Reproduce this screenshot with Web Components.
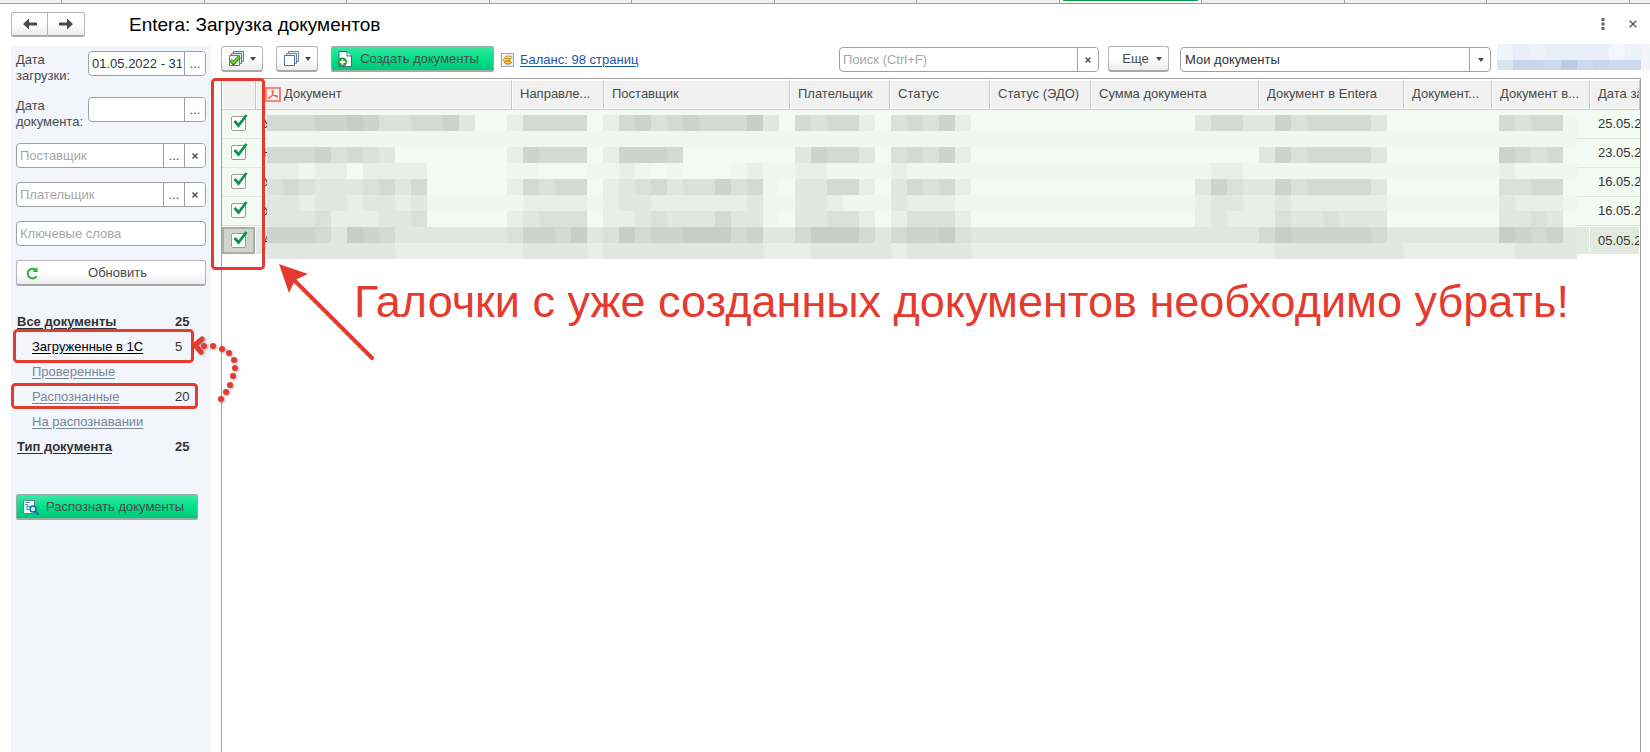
<!DOCTYPE html>
<html lang="ru">
<head>
<meta charset="utf-8">
<title>Entera: Загрузка документов</title>
<style>
  html, body { margin: 0; }
  body {
    font: 13px/16px "Liberation Sans", Arial, sans-serif;
    color: #4a4a4a;
    background: #fff;
    --line: #a0a0a0;
    --red: #e53b2e;
  }
</style>
</head>
<body>
<entera-app></entera-app>

<template id="t-app">
  <style>
    :host { display: flex; flex-direction: column; min-height: 100vh; position: relative; overflow: hidden; }
    .body { flex: 1; display: flex; gap: 10px; padding-left: 11px; }
    side-panel { flex: 0 0 200px; min-width: 0; }
    main { flex: 1; min-width: 0; display: flex; flex-direction: column; gap: 6px; }
    doc-table { flex: 1; margin-right: 9px; }
  </style>
  <tab-strip></tab-strip>
  <window-header>Entera: Загрузка документов</window-header>
  <div class="body">
    <side-panel></side-panel>
    <main>
      <doc-toolbar></doc-toolbar>
      <doc-table></doc-table>
    </main>
  </div>
  <note-layer>Галочки с уже созданных документов необходимо убрать!</note-layer>
</template>

<template id="t-tabs">
  <style>
    :host { display: flex; height: 3px; background: #f0f0f0; border-bottom: 1px solid var(--line); overflow: hidden; }
    i { flex: 0 0 8.64%; box-sizing: border-box; border-right: 1px solid var(--line); }
    i:first-of-type { flex-basis: 62px; }
    i.on { background: #fff; padding: 0 3px; }
    i.on::before { content: ""; display: block; height: 1px; background: #0a9a4a; }
  </style>
  <i></i><i></i><i></i><i></i><i></i><i></i><i></i><i></i><i class="on"></i><i></i><i></i><i></i><i></i>
</template>

<template id="t-header">
  <style>
    :host { display: flex; align-items: center; height: 42px; padding: 0 10px 0 11px; box-sizing: border-box; }
    .nav { display: flex; margin-bottom: 2px; }
    .nav button {
      width: 37px; height: 25px; padding: 0; border: 1px solid #b4b4b4; border-bottom: 2px solid #a8a8a8;
      background: linear-gradient(#fff 50%, #ececec); display: grid; place-items: center;
    }
    .nav button:first-child { border-radius: 3px 0 0 3px; }
    .nav button:last-child { border-radius: 0 3px 3px 0; border-left: 0; }
    h1 { margin: 0 auto 0 44px; font-size: 19px; line-height: 24px; font-weight: 400; color: #000; }
    .win { border: 0; background: none; padding: 0; width: 14px; height: 14px; margin: 0 0 2px 16px; display: grid; place-items: center; }
  </style>
  <div class="nav">
    <button aria-label="Назад"><svg width="14" height="12" viewBox="0 0 14 12"><path d="M0 6l6-5.500v4h8v3H6v4z" fill="#4a4a4a"/></svg></button>
    <button aria-label="Вперед"><svg width="14" height="12" viewBox="0 0 14 12"><path d="M14 6L8 .5v4H0v3h8v4z" fill="#4a4a4a"/></svg></button>
  </div>
  <h1><slot></slot></h1>
  <button class="win" aria-label="Меню"><svg width="4" height="12"><path d="M.5 0h3v3h-3zM.5 4.500h3v3h-3zM.5 9h3v3h-3z" fill="#666"/></svg></button>
  <button class="win" aria-label="Закрыть"><svg width="8" height="8"><path d="M.7.700l6.600 6.600M7.300.7L.7 7.300" stroke="#555" stroke-width="1.300"/></svg></button>
</template>

<template id="t-field">
  <style>
    :host { display: flex; align-items: flex-start; }
    label { flex: 0 0 72px; padding-top: 1px; height: 31px; }
    label:empty { display: none; }
    .box { flex: 1; min-width: 0; display: flex; height: 25px; box-sizing: border-box; border: 1px solid var(--line); border-radius: 4px; background: #fff; overflow: hidden; }
    input { flex: 1; min-width: 0; border: 0; padding: 0 2px 0 3px; background: none; font: inherit; color: #333; outline: 0; }
    input::placeholder { color: #a6a6a6; opacity: 1; }
    button { flex: 0 0 21px; box-sizing: border-box; border: 0; border-left: 1px solid var(--line); background: #fff; padding: 0; font: inherit; color: #4a4a4a; display: grid; place-items: center; }
  </style>
  <label for="f"></label>
  <div class="box"><input id="f" type="text"></div>
</template>

<template id="t-button">
  <style>
    :host { display: block; }
    button {
      width: 100%; height: 26px; box-sizing: border-box; padding: 1px 9px 0; display: flex; align-items: center;
      border: 1px solid #b4b4b4; border-bottom: 2px solid #a8a8a8; border-radius: 3px;
      background: linear-gradient(#fff 50%, #ececec); font: inherit; color: #4a4a4a; white-space: nowrap;
    }
    :host([green]) button { background: linear-gradient(#3ce8a4, #00e08a 50%, #00c878); border-color: #9aaea4; border-radius: 2px; padding: 1px 6px 0; }
    .text { flex: 1; text-align: center; }
    :host([icon-only]) button { padding: 0 6px; justify-content: space-between; }
    :host([icon-only]) .text { display: none; }
    .caret { display: none; width: 0; border: 3px solid transparent; border-top: 4px solid #4a4a4a; border-bottom: 0; }
    :host([menu]) .caret { display: block; }
    :host([menu]:not([icon-only])) button { padding: 1px 6px 0; }
  </style>
  <button><slot name="icon"></slot><span class="text"><slot></slot></span><span class="caret"></span></button>
</template>

<template id="t-side">
  <style>
    :host { display: block; background: #f2f5fb; padding: 5px 5px 0; box-sizing: border-box; }
    form { display: flex; flex-direction: column; gap: 14px; }
    svg { display: block; }
    table { width: 177px; margin: 23px 0 35px; border-collapse: collapse; }
    td, th { height: 25px; padding: 0 0 0 1px; text-align: left; font-weight: 400; color: #333; }
    th { padding-left: 16px; }
    td { width: 18px; }
    a { color: #7a8896; }
    a.on { color: #000; }
    .top th, .top td { font-weight: 700; }
    .top th { padding-left: 1px; }
    .top a { color: #333; }
    a { text-underline-offset: 2px; }
    .run { width: 182px; }
  </style>
  <form>
    <form-field label="Дата загрузки:" value="01.05.2022 - 31" pick></form-field>
    <form-field label="Дата документа:" pick></form-field>
    <form-field placeholder="Поставщик" pick clear></form-field>
    <form-field placeholder="Плательщик" pick clear></form-field>
    <form-field placeholder="Ключевые слова"></form-field>
    <tool-button>
      <svg slot="icon" width="13" height="13" viewBox="0 0 13 13"><path d="M10.600 9.200A4.800 4.800 0 1 1 9.600 2.900" fill="none" stroke="#2fae3c" stroke-width="2"/><path d="M11.500 0v5H6.500z" fill="#2fae3c"/></svg>
      Обновить
    </tool-button>
  </form>
  <table>
    <tr class="top"><th><a href="#all">Все документы</a></th><td>25</td></tr>
    <tr><th><a class="on" href="#loaded">Загруженные в 1С</a></th><td>5</td></tr>
    <tr><th><a href="#checked">Проверенные</a></th><td></td></tr>
    <tr><th><a href="#recognized">Распознанные</a></th><td>20</td></tr>
    <tr><th><a href="#pending">На распознавании</a></th><td></td></tr>
    <tr class="top"><th><a href="#type">Тип документа</a></th><td>25</td></tr>
  </table>
  <tool-button class="run" green>
    <svg slot="icon" width="16" height="15" viewBox="0 0 16 15"><path d="M.5.5h11v13H.5z" fill="#f4fbff" stroke="#5f8296"/><path d="M2 2.500h5M2 4.500h3M4 6.500h3M4 9.500h2M4 4v6" stroke="#4da08a" fill="none"/><circle cx="10" cy="9" r="3" fill="#cfe9ff" stroke="#1668b0" stroke-width="1.500"/><path d="M12 11l3.500 3.500" stroke="#1668b0" stroke-width="2"/></svg>
    Распознать документы
  </tool-button>
</template>

<template id="t-toolbar">
  <style>
    :host { display: flex; align-items: center; height: 26px; }
    svg { display: block; }
    .all, .none { width: 42px; margin-right: 13px; }
    .make { width: 163px; margin-right: 7px; }
    .balance { display: flex; align-items: center; gap: 6px; color: #1a56a8; white-space: nowrap; text-underline-offset: 2px; margin-right: auto; padding-top: 1px; }
    .search { width: 260px; margin: 1px 9px 0 0; }
    .more { width: 61px; margin-right: 11px; }
    .combo { position: relative; width: 311px; height: 25px; margin: 1px 6px 0 0; }
    select { appearance: none; width: 100%; height: 25px; padding: 0 26px 0 4px; border: 1px solid var(--line); border-radius: 4px; background: #fff; font: inherit; color: #333; }
    .combo i { position: absolute; right: 0; top: 0; width: 22px; height: 25px; border-left: 1px solid var(--line); box-sizing: border-box; display: grid; place-items: center; pointer-events: none; }
    .combo i::before { content: ""; border: 3px solid transparent; border-top: 4px solid #4a4a4a; border-bottom: 0; }
    pixel-mask { align-self: flex-start; margin-top: -2px; }
  </style>
  <tool-button class="all" icon-only menu>
    <svg slot="icon" width="17" height="16" viewBox="0 0 17 16"><path d="M5.500 3V.5h10v10H13M3.500 5V2.500h10v10H11" fill="#dfe9f3" stroke="#5b7a99"/><path d="M1.500 4.500h10v10h-10z" fill="#fff" stroke="#5b7a99"/><path d="M2.500 9l3 3.500 6-7" fill="none" stroke="#3a8a1e" stroke-width="3.600"/><path d="M2.800 9.200l2.800 2.800 5.600-6.200" fill="none" stroke="#7fd13a" stroke-width="1.800"/></svg>
  </tool-button>
  <tool-button class="none" icon-only menu>
    <svg slot="icon" width="17" height="16" viewBox="0 0 17 16"><path d="M5.500 3V.5h10v10H13M3.500 5V2.500h10v10H11" fill="#e8eef5" stroke="#6b88a8"/><path d="M1.500 4.500h10v10h-10z" fill="#fff" stroke="#4d7299"/></svg>
  </tool-button>
  <tool-button class="make" green>
    <svg slot="icon" width="14" height="16" viewBox="0 0 14 16"><path d="M1 .5h8l4.500 4.500v10.500H1z" fill="#fff" stroke="#3d6a80"/><path d="M9 .5V5h4.500" fill="#dceaf2" stroke="#3d6a80"/><circle cx="4.500" cy="11" r="4.500" fill="#2c9a3a"/><path d="M4.500 8.300v5.400M1.800 11h5.400" stroke="#fff" stroke-width="1.800"/></svg>
    Создать документы
  </tool-button>
  <a class="balance" href="#balance"><svg width="13" height="14" viewBox="0 0 13 14"><path d="M.5.5h12v13H.5z" fill="#eef3f8" stroke="#8fa6ba"/><ellipse cx="7.500" cy="4.500" rx="3.500" ry="1.500" fill="#ffd75a" stroke="#c07d10" stroke-width=".8"/><ellipse cx="5.500" cy="7" rx="3.500" ry="1.500" fill="#ffd75a" stroke="#c07d10" stroke-width=".8"/><ellipse cx="7" cy="9.500" rx="3.500" ry="1.700" fill="#ffc52e" stroke="#b06c08" stroke-width=".8"/></svg><span>Баланс: 98 страниц</span></a>
  <form-field class="search" placeholder="Поиск (Ctrl+F)" clear></form-field>
  <tool-button class="more" menu>Еще</tool-button>
  <div class="combo"><select aria-label="Отбор"><option>Мои документы</option></select><i></i></div>
  <pixel-mask id="user"></pixel-mask>
</template>

<template id="t-table">
  <style>
    :host { display: block; position: relative; border: 1px solid var(--line); border-bottom: 0; overflow: hidden; }
    table { width: 100%; table-layout: fixed; border-collapse: separate; border-spacing: 0; }
    th, td { box-sizing: border-box; padding: 0 0 0 8px; text-align: left; font-weight: 400; white-space: nowrap; overflow: hidden; }
    th { height: 31px; background: #f1f1f1; border: 2px solid #fff; border-right: 1px solid #c8c8c8; border-left: 1px solid #fff; box-shadow: inset 0 -1px #fff; border-bottom: 1px solid #c8c8c8; padding: 0 0 2px 7px; }
    th span { display: flex; align-items: center; gap: 3px; }
    th:nth-child(2) { padding-left: 8px; }
    td { height: 29px; background: #f3faf3; border-bottom: 1px solid #e2e2e2; color: #333; }
    th:first-child, td:first-child { padding: 0; }
    td:nth-child(2) { padding-left: 7px; }
    tr.on td { background: #e2e9e1; border-top: 1px solid #fff; border-right: 1px solid #fff; border-bottom: 1px solid #fff; box-shadow: none; }
    tr.on td:first-child { background: #cfd5ce; box-shadow: inset 0 0 0 2px #a9afa9; }
    pixel-mask { position: absolute; left: 45px; top: 36px; }
    svg { display: block; }
  </style>
  <table>
    <colgroup><col style="width:34px"><col style="width:256px"><col style="width:92px"><col style="width:186px"><col style="width:100px"><col style="width:100px"><col style="width:101px"><col style="width:168px"><col style="width:145px"><col style="width:88px"><col style="width:98px"><col></colgroup>
    <thead><tr>
      <th></th>
      <th><span><svg width="16" height="15" viewBox="0 0 16 15"><path d="M1 1h14v13H1z" fill="#fdf0ee" stroke="#ec6a5c" stroke-width="1.600"/><path d="M7.500 3c1.500 0 .5 4-1 6.200-1.200 1.800-2.900 2.800-3.200 2.200-.4-1 3-2.600 5.200-2.900 2-.3 4.400 0 4.200 1.100C12.500 10.500 9.500 9.300 8.200 7.300 7 5.500 6.500 3 7.500 3z" fill="none" stroke="#e8503f"/></svg>Документ</span></th>
      <th>Направле...</th><th>Поставщик</th><th>Плательщик</th><th>Статус</th><th>Статус (ЭДО)</th><th>Сумма документа</th><th>Документ в Entera</th><th>Документ...</th><th>Документ в...</th><th>Дата загрузки</th>
    </tr></thead>
    <tbody></tbody>
  </table>
  <pixel-mask id="rows"></pixel-mask>
</template>

<template id="t-check">
  <style>
    :host { display: block; position: relative; width: 15px; height: 15px; margin: 0 auto 1px 9px; }
    input { appearance: none; display: block; margin: 0; width: 15px; height: 15px; box-sizing: border-box; border: 1px solid #999; border-radius: 2px; background: #fff; }
    svg { position: absolute; left: 2px; top: -2px; pointer-events: none; display: none; }
    input:checked + svg { display: block; }
  </style>
  <input type="checkbox" checked aria-label="Выбрать документ"><svg width="15" height="14" viewBox="0 0 15 14"><path d="M1.500 7l4 4.500L13.500 1" fill="none" stroke="#0a9650" stroke-width="2.800"/></svg>
</template>

<template id="t-notes">
  <style>
    :host { position: absolute; inset: 0; pointer-events: none; overflow: hidden; color: var(--red); }
    svg { position: absolute; left: 0; top: 0; }
    p { position: absolute; left: 354px; top: 276px; margin: 0; font-size: 45px; line-height: 52px; white-space: nowrap; }
  </style>
  <svg width="400" height="420" fill="none" stroke="#e53b2e" stroke-width="3">
    <rect x="212.500" y="79.500" width="51" height="189" rx="3"/>
    <rect x="14.500" y="330.500" width="178" height="31" rx="3"/>
    <rect x="12.500" y="384.500" width="184" height="23" rx="3"/>
    <path d="M292 278l80 80" stroke-width="4" stroke-linecap="round"/>
    <path d="M279 264l29 10-13 6-6 13z" fill="#e53b2e" stroke="none"/>
    <g style="filter:drop-shadow(1px 1px 1px #0005)">
      <path d="M202 339l-7 6 6 7" stroke-width="5" stroke-linecap="round" stroke-linejoin="round"/>
      <g fill="#e53b2e" stroke="none"><circle cx="204" cy="346" r="3"/><circle cx="213" cy="346" r="3"/><circle cx="222" cy="349" r="3"/><circle cx="229" cy="353" r="3"/><circle cx="234" cy="360" r="3"/><circle cx="235" cy="368" r="3"/><circle cx="233" cy="376" r="3"/><circle cx="230" cy="385" r="3"/><circle cx="226" cy="392" r="3"/><circle cx="221" cy="399" r="3"/></g>
    </g>
  </svg>
  <p><slot></slot></p>
</template>

<script>
  class Base extends HTMLElement {
    constructor() {
      super();
      this.attachShadow({ mode: 'open' });
      if (this.constructor.tpl) {
        this.shadowRoot.append(document.getElementById(this.constructor.tpl).content.cloneNode(true));
      }
    }
    $(sel) { return this.shadowRoot.querySelector(sel); }
  }
  const simple = (name, tpl) => customElements.define(name, class extends Base { static tpl = tpl; });

  // Mosaic over private data: each row is a list of letter + repeat count, one letter per shade.
  const MASKS = {
    rows: {
      size: 16, width: 1310, height: 144,
      shades: { a: '#f3faf3', b: '#f0f7f1', c: '#e9efe8', d: '#e1e8e1', e: '#dbe1da', f: '#d4dad3', g: '#ced4cd', h: '#c7cdc7' },
      rows: [
        'f3g2hge2f2gda2cf4acfgefgf3hdafef2caefegca14df2d2gef4da7fef2b',
        'b82',
        'f3gefeda7cgf3acg3fa7dgf2daefegca18dgef4da7gfefa',
        'c2bc2ac4a5b2a3b2cbaba3bcb2c2b4cb4b14bc2b16cb4',
        'efed3efdfa5cfef2acdefde2gefbad2f2cadfefca14dged2gef4da7e2f2a',
        'd2cd2cd2cdb5bc4bcd2c6dbbd2cb2bdc3bb14cd2c2dc6b7dc3b',
        'd3ec3d2ea5cde3ac2ded3fd2bad2e2cace3ca14cdc3ed2ed3a7d2eda',
        'g3fdhgfd7eg2fhdehfg2h3fgd2fh3fdfg2hed18fhg5fd7hgfgd',
        'd8c7cd4cd10cccd5cd4cc18d8c7d4c'
      ]
    },
    user: {
      size: 16, width: 153, height: 26,
      shades: { a: '#f1f4fa', b: '#e9eff8', c: '#eef2f8', d: '#e6eff7', e: '#f3f6fc', f: '#d8e5f0', g: '#c6d6ec', h: '#b9cbe6', i: '#cbdaee', j: '#f2f4f9' },
      rows: ['abcbdb2ecj', 'fg2ihigi2j']
    }
  };

  customElements.define('pixel-mask', class extends Base {
    connectedCallback() {
      const m = MASKS[this.id];
      let rects = '';
      m.rows.forEach((row, y) => {
        let x = 0;
        for (const [, key, n] of row.matchAll(/([a-z])(\d*)/g)) {
          const w = (+n || 1) * m.size;
          rects += `<rect x="${x}" y="${y * m.size}" width="${w}" height="${m.size}" fill="${m.shades[key]}"/>`;
          x += w;
        }
      });
      this.shadowRoot.innerHTML = `<style>:host{display:block}svg{display:block}</style>
        <svg width="${m.width}" height="${m.height}" shape-rendering="crispEdges">${rects}</svg>`;
    }
  });

  customElements.define('form-field', class extends Base {
    static tpl = 't-field';
    connectedCallback() {
      const input = this.$('input'), box = this.$('.box');
      this.$('label').textContent = this.getAttribute('label') || '';
      input.value = this.getAttribute('value') || '';
      if (this.hasAttribute('placeholder')) {
        input.placeholder = this.getAttribute('placeholder');
        input.setAttribute('aria-label', input.placeholder);
      }
      const add = (html, name) => {
        const b = document.createElement('button');
        b.type = 'button';
        b.innerHTML = html;
        b.setAttribute('aria-label', name);
        box.append(b);
      };
      if (this.hasAttribute('pick')) add('...', 'Выбрать');
      if (this.hasAttribute('clear')) add('<svg width="6" height="6"><path d="M.5.5l5 5M5.500.5l-5 5" stroke="#4a4a4a" stroke-width="1.400"/></svg>', 'Очистить');
    }
  });

  simple('tool-button', 't-button');
  simple('check-mark', 't-check');
  simple('tab-strip', 't-tabs');
  simple('window-header', 't-header');
  simple('side-panel', 't-side');
  simple('doc-toolbar', 't-toolbar');
  simple('note-layer', 't-notes');

  customElements.define('doc-table', class extends Base {
    static tpl = 't-table';
    connectedCallback() {
      const rows = [['У', '25.05.2022'], ['Н', '23.05.2022'], ['У', '16.05.2022'], ['У', '16.05.2022'], ['А', '05.05.2022']];
      this.$('tbody').innerHTML = rows.map(([doc, date], i) =>
        `<tr${i === 4 ? ' class="on"' : ''}><td><check-mark></check-mark></td><td>${doc}</td>${'<td></td>'.repeat(9)}<td>${date}</td></tr>`).join('');
    }
  });

  simple('entera-app', 't-app');
</script>
</body>
</html>
